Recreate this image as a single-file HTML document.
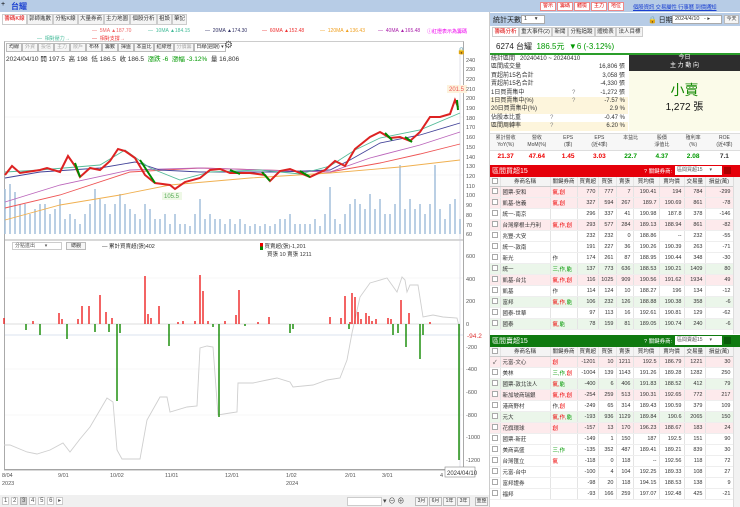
<!DOCTYPE html>
<html><head><meta charset="utf-8">
<style>
*{box-sizing:border-box;margin:0;padding:0}
body{width:740px;height:507px;overflow:hidden;background:#fff;font-family:"Liberation Sans","Noto Sans CJK TC",sans-serif;font-size:7px;color:#333;position:relative}
.a{position:absolute;white-space:nowrap}
.tab{position:absolute;top:14px;height:11px;border:1px solid #ccc;background:#f4f4f4;font-size:5.5px;line-height:9px;text-align:center;color:#333;overflow:hidden;white-space:nowrap}
.btn{position:absolute;height:9px;border:1px solid #bbb;background:#f6f6f6;font-size:5px;line-height:7px;text-align:center;color:#333;overflow:hidden;white-space:nowrap}
table{border-collapse:collapse;font-size:5.5px;table-layout:fixed}
.t td{height:11px;border-right:1px solid #e4e4e4;border-bottom:1px solid #eee;padding:0 2px;text-align:right;white-space:nowrap;overflow:hidden}
.t td:nth-child(1){text-align:center;padding:0}
.t td:nth-child(2),.t td:nth-child(3){text-align:left}
.t tr.h td{height:9px;background:#f4f4f4;text-align:center;border-bottom:1px solid #ccc}
.p td{background:#fdeaec}
.g td{background:#ebf6ea}
.cb{display:inline-block;width:6px;height:6px;border:1px solid #aaa;background:#fff;vertical-align:middle}
.r{color:#e00}.gr{color:#090}
.st{position:absolute;left:490px;width:138px;height:8.4px;font-size:6px;line-height:8.4px;padding-left:1px}
.st span{position:absolute;right:3px}
.st i{position:absolute;font-style:normal;color:#888}
</style></head><body>

<div class="a" style="left:0;top:0;width:740px;height:12px;background:#b7cce6"></div>
<div class="a" style="left:1px;top:1px;font-size:7px;color:#000">+</div>
<div class="a" style="left:11px;top:1px;font-size:8px;color:#1a3fd0;font-weight:bold">台耀</div>
<span class="btn" style="left:540px;top:2px;width:16px;color:#d00;border-color:#e88;background:#fff">警示</span>
<span class="btn" style="left:557px;top:2px;width:16px;color:#d00;border-color:#e88;background:#fff">籌碼</span>
<span class="btn" style="left:574px;top:2px;width:16px;color:#d00;border-color:#e88;background:#fff">體檢</span>
<span class="btn" style="left:591px;top:2px;width:16px;color:#d00;border-color:#e88;background:#fff">主力</span>
<span class="btn" style="left:608px;top:2px;width:16px;color:#d00;border-color:#e88;background:#fff">地位</span>
<div class="a" style="left:633px;top:3px;font-size:5.5px;color:#1a3fd0;text-decoration:underline;letter-spacing:-0.2px">個股資訊 交易屬性 行事曆 到價通知</div>

<div class="tab" style="left:2px;width:25px;color:#d00;background:#fff">籌碼K線</div>
<div class="tab" style="left:27px;width:26px">郭師進數</div>
<div class="tab" style="left:53px;width:25px">分點K線</div>
<div class="tab" style="left:78px;width:26px">大量券商</div>
<div class="tab" style="left:104px;width:26px">主力地圖</div>
<div class="tab" style="left:130px;width:27px">個股分析</div>
<div class="tab" style="left:157px;width:15px">祖設</div>
<div class="tab" style="left:172px;width:15px">筆記</div>

<div class="a" style="left:92px;top:28px;font-size:5px;color:#e66">— &nbsp;5MA ▲187.70</div>
<div class="a" style="left:148px;top:28px;font-size:5px;color:#4b9">— &nbsp;10MA ▲184.15</div>
<div class="a" style="left:205px;top:28px;font-size:5px;color:#336">— &nbsp;20MA ▲174.30</div>
<div class="a" style="left:262px;top:28px;font-size:5px;color:#e33">— &nbsp;60MA ▲152.48</div>
<div class="a" style="left:320px;top:28px;font-size:5px;color:#f0a020">— &nbsp;120MA ▲136.43</div>
<div class="a" style="left:378px;top:28px;font-size:5px;color:#a2a">— &nbsp;40MA ▲165.48</div>
<div class="a" style="left:427px;top:28px;font-size:5px;color:#e0e">ⓘ紅燈表示為籌碼</div>
<div class="a" style="left:37px;top:35px;font-size:5px;color:#4b9">— &nbsp;相對壓力→</div>
<div class="a" style="left:92px;top:35px;font-size:5px;color:#e33">— &nbsp;相對支撐→</div>

<div class="a" style="left:4px;top:41px;width:460px;height:429px;border:1px solid #aaa;border-top:1px solid #ccc"></div>
<span class="btn" style="left:6px;top:43px;width:16px">均線</span><span class="btn" style="left:22px;top:43px;width:16px;color:#aaa">外資</span><span class="btn" style="left:38px;top:43px;width:16px;color:#aaa">投信</span><span class="btn" style="left:54px;top:43px;width:16px;color:#aaa">主力</span><span class="btn" style="left:70px;top:43px;width:16px;color:#aaa">散戶</span><span class="btn" style="left:86px;top:43px;width:16px">布林</span><span class="btn" style="left:102px;top:43px;width:16px">籌數</span><span class="btn" style="left:118px;top:43px;width:16px">揮盤</span><span class="btn" style="left:134px;top:43px;width:20px">本益比</span><span class="btn" style="left:154px;top:43px;width:20px">紅綠燈</span><span class="btn" style="left:174px;top:43px;width:20px;color:#aaa">分價籌</span><span class="btn" style="left:194px;top:43px;width:32px;background:#fff">日線(週期) ▾</span>
<span class="a" style="left:224px;top:40px;font-size:10px;color:#555">⚙</span>
<div class="a" style="left:6px;top:53px;font-size:6.5px;color:#333">2024/04/10 開 197.5 &nbsp;高 198 &nbsp;低 186.5 &nbsp;收 186.5 &nbsp;<span class="gr">漲跌 -6 &nbsp;漲幅 -3.12%</span> &nbsp;量 16,806</div>
<div class="a" style="left:457px;top:47px;font-size:7px">🔒</div>

<svg class="a" style="left:0;top:0" width="490" height="495">
<g stroke="#f0f0f0" stroke-width="0.6">
<line x1="5" y1="117" x2="463" y2="117"/><line x1="5" y1="175" x2="463" y2="175"/>
<line x1="5" y1="278" x2="463" y2="278"/><line x1="5" y1="369" x2="463" y2="369"/><line x1="5" y1="415" x2="463" y2="415"/></g>
<line x1="5" y1="240" x2="463" y2="240" stroke="#999" stroke-width="0.8"/>
<line x1="460" y1="55" x2="460" y2="470" stroke="#ccd" stroke-width="0.6"/>
<path stroke="#a9c3dd" stroke-width="1.6" fill="none" d="M5 234V189M10 234V184M15 234V192M20 234V204M25 234V204M30 234V214M35 234V209M40 234V204M45 234V204M50 234V214M55 234V209M60 234V199M65 234V219M70 234V214M75 234V219M80 234V224M85 234V214M90 234V204M95 234V189M100 234V199M105 234V204M110 234V214M115 234V204M120 234V194M125 234V204M130 234V209M135 234V214M140 234V219M145 234V204M150 234V209M155 234V219M160 234V219M165 234V214M170 234V224M175 234V214M180 234V224M185 234V224M190 234V226M195 234V214M200 234V199M205 234V219M210 234V214M215 234V219M220 234V219M225 234V224M230 234V219M235 234V224M240 234V219M245 234V224M250 234V226M255 234V224M260 234V226M265 234V224M270 234V226M275 234V224M280 234V219M285 234V219M290 234V214M295 234V224M300 234V224M305 234V224M310 234V224M315 234V219M320 234V226M325 234V214M330 234V187M335 234V219M340 234V224M345 234V214M350 234V204M355 234V199M360 234V204M365 234V209M370 234V194M375 234V209M380 234V199M385 234V214M390 234V214M395 234V204M400 234V165M405 234V209M410 234V199M415 234V209M420 234V204M425 234V214M430 234V204M435 234V165M440 234V209M445 234V219M450 234V204M455 234V199M460 234V219"/>
<polyline fill="none" stroke="#f0b050" stroke-width="0.9" points="5,220 60,205 120,195 170,185 250,178 330,173 400,167 460,160"/>
<polyline fill="none" stroke="#e55" stroke-width="0.9" points="5,208 60,195 130,172 200,168 330,172 380,163 420,154 460,144"/>
<polyline fill="none" stroke="#b6b" stroke-width="0.9" points="5,202 60,185 130,170 200,168 330,172 370,158 420,145 460,132"/>
<polyline fill="none" stroke="#449" stroke-width="0.9" points="5,178 40,172 100,168 135,162 160,170 200,172 280,172 330,170 350,160 380,143 420,135 460,123"/>
<polyline fill="none" stroke="#5b9" stroke-width="0.9" points="5,172 40,170 100,165 125,150 150,168 180,180 210,172 260,170 300,174 330,166 355,150 380,138 420,130 460,113"/>
<polyline fill="none" stroke="#d22" stroke-width="2" points="5,175 12,166 20,173 40,170 47,168 60,172 68,156 75,166 80,177 90,168 100,170 110,161 118,149 125,151 135,158 145,175 155,183 170,185 175,189 185,182 200,178 210,170 220,169 230,173 250,173 265,175 270,181 280,171 290,169 300,173 310,177 325,170 335,161 345,166 355,149 370,137 380,132 390,138 400,137 410,141 420,132 430,117 440,117 450,114 455,100 458,107"/>
<g stroke="#080" stroke-width="2"><line x1="75" y1="163" x2="80" y2="177"/><line x1="140" y1="160" x2="155" y2="183"/><line x1="230" y1="170" x2="240" y2="174"/><line x1="262" y1="172" x2="270" y2="181"/><line x1="300" y1="171" x2="310" y2="177"/><line x1="385" y1="133" x2="392" y2="140"/><line x1="405" y1="137" x2="412" y2="142"/><line x1="457" y1="100" x2="458" y2="110"/></g>
<rect x="447" y="85" width="20" height="8" fill="#fdf2dc"/><text x="449" y="91" font-size="6" fill="#e55">201.5</text>
<rect x="162" y="192" width="20" height="8" fill="#eef8e6"/><text x="164" y="198" font-size="6" fill="#5a5">105.5</text>
<g font-size="5.5" fill="#555">
<text x="466" y="62">240</text><text x="466" y="71">230</text><text x="466" y="81">220</text><text x="466" y="91">210</text><text x="466" y="100">200</text><text x="466" y="110">190</text><text x="466" y="120">180</text><text x="466" y="129">170</text><text x="466" y="139">160</text><text x="466" y="149">150</text><text x="466" y="159">140</text><text x="466" y="168">130</text><text x="466" y="178">120</text><text x="466" y="188">110</text><text x="466" y="197">100</text><text x="466" y="207">90</text><text x="466" y="217">80</text><text x="466" y="227">70</text><text x="466" y="236">60</text>
<text x="466" y="258">600</text><text x="466" y="281">400</text><text x="466" y="303">200</text><text x="466" y="326">0</text><text x="466" y="349">-200</text><text x="466" y="371">-400</text><text x="466" y="394">-600</text><text x="466" y="417">-800</text><text x="466" y="439">-1000</text><text x="466" y="462">-1200</text></g>
<text x="467" y="338" font-size="6.5" fill="#d33">-94.2</text>
<line x1="5" y1="335" x2="463" y2="335" stroke="#b8c8e0" stroke-width="0.6"/>
<line x1="5" y1="324" x2="460" y2="324" stroke="#bbb" stroke-width="0.6"/>
<polyline fill="none" stroke="#cfcfcf" stroke-width="0.9" points="4,445 10,445 27,452 37,454 50,450 63,443 70,452 80,439 90,427 100,410 107,398 113,402 117,450 122,459 140,459 147,420 160,397 167,397 170,412 187,407 197,406 200,348 207,346 213,347 218,415 230,413 237,412 238,383 253,383 267,380 277,378 290,382 293,387 313,385 327,380 340,378 347,360 352,333 360,297 370,283 387,278 397,292 402,277 405,280 407,292 410,285 418,285 423,317 433,315 443,317 457,318 460,330"/>
<path stroke="#e22" stroke-width="1.4" fill="none" d="M4 324V318M33 324V321M59 324V313M62 324V319M78 324V319M82 324V306M89 324V306M100 324V295M106 324V312M112 324V318M145 324V276M148 324V314M151 324V318M159 324V306M178 324V322M183 324V321M195 324V321M200 324V275M203 324V291M208 324V321M225 324V321M236 324V315M239 324V290M258 324V322M269 324V317M330 324V317M341 324V318M345 324V296M352 324V293M355 324V297M358 324V312M361 324V319M366 324V313M369 324V316M372 324V321M376 324V319M388 324V318M391 324V319M401 324V300M409 324V313M430 324V322M350 324V322"/>
<path stroke="#180" stroke-width="1.4" fill="none" d="M26 324V330M40 324V335M50 324V324M67 324V339M95 324V332M109 324V332M117 324V401M120 324V333M169 324V346M213 324V327M219 324V417M245 324V326M290 324V333M293 324V329M349 324V329M393 324V335M398 324V333M406 324V347M420 324V359M423 324V335M459 324V460"/>
<line x1="4" y1="470" x2="463" y2="470" stroke="#999" stroke-width="0.8"/>
<g font-size="5.5" fill="#555"><text x="2" y="477">8/04</text><text x="2" y="485">2023</text><text x="58" y="477">9/01</text><text x="110" y="477">10/02</text><text x="165" y="477">11/01</text><text x="225" y="477">12/01</text><text x="286" y="477">1/02</text><text x="286" y="485">2024</text><text x="345" y="477">2/01</text><text x="382" y="477">3/01</text><text x="440" y="477">4</text></g>
<rect x="445" y="467" width="30" height="10" fill="#fff" stroke="#888" stroke-width="0.6"/><text x="447" y="475" font-size="6" fill="#333">2024/04/10</text>
</svg>

<div class="a" style="left:12px;top:242px;width:50px;height:8px;border:1px solid #ccc;font-size:5px;line-height:6px;padding-left:2px;color:#555">分點進出 &nbsp; &nbsp; &nbsp; ▾</div>
<div class="btn" style="left:66px;top:242px;width:20px;height:8px">總觀</div>
<div class="a" style="left:102px;top:242px;font-size:5.5px">— 累計買賣超(張)402</div>
<div class="a" style="left:260px;top:242px;font-size:5.5px"><span style="display:inline-block;width:3px;height:7px;background:linear-gradient(#e00 50%,#080 50%);vertical-align:middle"></span> 買賣超(張)-1,201</div>
<div class="a" style="left:267px;top:250px;font-size:5.5px">買張 10 賣張 1211</div>

<div class="a" style="left:0;top:495px;width:490px;height:12px;background:#f0f0f0"></div>
<div class="a" style="left:2px;top:497px;font-size:6px;color:#555">
<span style="border:1px solid #ccc;background:#fff;padding:0 1px">1</span> <span style="border:1px solid #ccc;background:#fff;padding:0 1px">2</span> <span style="border:1px solid #aaa;background:#ccc;padding:0 1px">3</span> <span style="border:1px solid #ccc;background:#fff;padding:0 1px">4</span> <span style="border:1px solid #ccc;background:#fff;padding:0 1px">5</span> <span style="border:1px solid #ccc;background:#fff;padding:0 1px">6</span> <span style="border:1px solid #ccc;background:#fff;padding:0 1px">▸</span></div>
<div class="a" style="left:347px;top:497px;width:35px;height:9px;border:1px solid #ccc;background:#fff"></div>
<div class="a" style="left:383px;top:496px;font-size:7px;color:#444">▾ ⊖ ⊕</div>
<span class="btn" style="left:415px;top:497px;width:13px">3月</span><span class="btn" style="left:429px;top:497px;width:13px">6月</span><span class="btn" style="left:443px;top:497px;width:13px">1年</span><span class="btn" style="left:457px;top:497px;width:13px">3年</span><span class="btn" style="left:475px;top:497px;width:13px">重整</span>

<div class="a" style="left:489px;top:12px;width:1px;height:495px;background:#ccc"></div>
<div class="a" style="left:490px;top:13px;width:250px;height:13px;background:#b7cce6"></div>
<div class="a" style="left:493px;top:15px;font-size:7px;color:#222">統計天數</div>
<div class="a" style="left:521px;top:15px;width:24px;height:9px;background:#fff;border:1px solid #aaa;font-size:5.5px;line-height:7px;padding-left:2px">1 &nbsp; &nbsp; ▾</div>
<div class="a" style="left:648px;top:15px;font-size:7px;color:#222">🔒 日期</div>
<div class="a" style="left:672px;top:15px;width:50px;height:9px;background:#fff;border:1px solid #aaa;font-size:5.5px;line-height:7px;padding-left:2px">2024/4/10 &nbsp; - ▸</div>
<div class="btn" style="left:724px;top:15px;width:15px">今天</div>
<div class="tab" style="left:492px;top:27px;width:27px;height:10px;color:#d00;background:#fff">籌碼分析</div>
<div class="tab" style="left:519px;top:27px;width:33px;height:10px">重大事件(2)</div>
<div class="tab" style="left:552px;top:27px;width:16px;height:10px">新聞</div>
<div class="tab" style="left:568px;top:27px;width:27px;height:10px">分點追蹤</div>
<div class="tab" style="left:595px;top:27px;width:21px;height:10px">體檢表</div>
<div class="tab" style="left:616px;top:27px;width:27px;height:10px">法人目標</div>
<div class="a" style="left:496px;top:41px;font-size:8px;color:#222">6274 台耀 &nbsp;<span class="gr">186.5元 &nbsp;▼6 (-3.12%)</span></div>
<div class="a" style="left:490px;top:53px;width:250px;height:1.5px;background:#2a9d2a"></div>

<div class="st" style="top:55px">統計區間 &nbsp; 20240410 ~ 20240410</div>
<div class="st" style="top:63.4px">區間成交量<span>16,806 張</span></div>
<div class="st" style="top:71.8px">買超前15名合計<span>3,058 張</span></div>
<div class="st" style="top:80.2px">賣超前15名合計<span>-4,330 張</span></div>
<div class="st" style="top:88.6px">1日買賣集中<i style="left:82px">?</i><span>-1,272 張</span></div>
<div class="st" style="top:97px;background:#fdf5dc">1日買賣集中(%)<i style="left:82px">?</i><span>-7.57 %</span></div>
<div class="st" style="top:105.4px;background:#fdf5dc">20日買賣集中(%)<span>2.9 %</span></div>
<div class="st" style="top:113.8px">佔股本比重<i style="left:60px">?</i><span>-0.47 %</span></div>
<div class="st" style="top:122.2px;background:#fdf5dc">區間周轉率<i style="left:60px">?</i><span>6.20 %</span></div>
<div class="a" style="left:629px;top:55px;width:111px;height:16px;background:#2d2d2d;color:#fff;font-size:6px;text-align:center;line-height:7.5px">今日<br>主 力 動 向</div>
<div class="a" style="left:629px;top:71px;width:111px;height:60px;background:#fbfbe9"></div>
<div class="a" style="left:629px;top:80px;width:111px;text-align:center;font-size:14px;color:#180">小賣</div>
<div class="a" style="left:629px;top:98px;width:111px;text-align:center;font-size:10px;color:#111">1,272 張</div>

<div class="a" style="left:490px;top:133px;width:250px;height:18px;background:#f7f7f7;border-top:1px solid #ddd;border-bottom:1px solid #ddd"></div>
<div class="a" style="left:490px;top:135px;width:250px;font-size:5px;line-height:6.5px;color:#444;display:flex;text-align:center">
<div style="flex:1">累計營收<br>YoY(%)</div><div style="flex:1">營收<br>MoM(%)</div><div style="flex:1">EPS<br>(季)</div><div style="flex:1">EPS<br>(近4季)</div><div style="flex:1">本益比</div><div style="flex:1">股價<br>淨值比</div><div style="flex:1">殖利率<br>(%)</div><div style="flex:1">ROE<br>(近4季)</div></div>
<div class="a" style="left:490px;top:153px;width:250px;font-size:6.5px;font-weight:bold;display:flex;text-align:center">
<div style="flex:1" class="r">21.37</div><div style="flex:1" class="r">47.64</div><div style="flex:1" class="r">1.45</div><div style="flex:1" class="r">3.03</div><div style="flex:1" class="gr">22.7</div><div style="flex:1" class="gr">4.37</div><div style="flex:1" class="gr">2.08</div><div style="flex:1;color:#333">7.1</div></div>

<div class="a" style="left:490px;top:165px;width:250px;height:12px;background:#e5000a"></div>
<div class="a" style="left:492px;top:166px;font-size:7px;color:#fff">區間買超15</div>
<div class="a" style="left:644px;top:167px;font-size:5.5px;color:#fff">? 關鍵券商:</div>
<div class="a" style="left:675px;top:166px;width:47px;height:9px;background:#fff;font-size:5px;line-height:9px;padding-left:2px;color:#555">區間買超15 &nbsp; &nbsp; ▾</div>
<div class="a" style="left:724px;top:167px;width:7px;height:7px;background:#a00"></div>
<table class="t a" style="left:490px;top:177px;width:243px">
<colgroup><col style="width:10px"><col style="width:50px"><col style="width:27px"><col style="width:21px"><col style="width:18px"><col style="width:17px"><col style="width:26px"><col style="width:25px"><col style="width:21px"><col style="width:28px"></colgroup>
<tr class="h"><td><span class="cb"></span></td><td style="text-align:center">券商名稱</td><td style="text-align:center">關鍵券商</td><td>買賣超</td><td>買張</td><td>賣張</td><td>買均價</td><td>賣均價</td><td>交易量</td><td>損益(萬)</td></tr>
<tr class="p"><td><span class="cb"></span></td><td>國票-安和</td><td class="r">氣,創</td><td>770</td><td>777</td><td>7</td><td>190.41</td><td>194</td><td>784</td><td>-299</td></tr>
<tr class="p"><td><span class="cb"></span></td><td>凱基-信義</td><td class="r">氣,創</td><td>327</td><td>594</td><td>267</td><td>189.7</td><td>190.69</td><td>861</td><td>-78</td></tr>
<tr><td><span class="cb"></span></td><td>統一-南京</td><td></td><td>296</td><td>337</td><td>41</td><td>190.98</td><td>187.8</td><td>378</td><td>-146</td></tr>
<tr class="p"><td><span class="cb"></span></td><td>台灣摩根士丹利</td><td class="r">氣,作,創</td><td>293</td><td>577</td><td>284</td><td>189.13</td><td>188.94</td><td>861</td><td>-82</td></tr>
<tr><td><span class="cb"></span></td><td>兆豐-大安</td><td></td><td>232</td><td>232</td><td>0</td><td>188.86</td><td>--</td><td>232</td><td>-55</td></tr>
<tr><td><span class="cb"></span></td><td>統一-敦南</td><td></td><td>191</td><td>227</td><td>36</td><td>190.26</td><td>190.39</td><td>263</td><td>-71</td></tr>
<tr><td><span class="cb"></span></td><td>新光</td><td>作</td><td>174</td><td>261</td><td>87</td><td>188.95</td><td>190.44</td><td>348</td><td>-30</td></tr>
<tr class="g"><td><span class="cb"></span></td><td>統一</td><td class="gr">三,作,能</td><td>137</td><td>773</td><td>636</td><td>188.53</td><td>190.21</td><td>1409</td><td>80</td></tr>
<tr class="p"><td><span class="cb"></span></td><td>凱基-台北</td><td class="r">氣,作,創</td><td>116</td><td>1025</td><td>909</td><td>190.56</td><td>191.62</td><td>1934</td><td>49</td></tr>
<tr><td><span class="cb"></span></td><td>凱基</td><td>作</td><td>114</td><td>124</td><td>10</td><td>188.27</td><td>196</td><td>134</td><td>-12</td></tr>
<tr class="g"><td><span class="cb"></span></td><td>富邦</td><td class="r">氣,作,<span class="gr">能</span></td><td>106</td><td>232</td><td>126</td><td>188.88</td><td>190.38</td><td>358</td><td>-6</td></tr>
<tr><td><span class="cb"></span></td><td>國泰-世華</td><td></td><td>97</td><td>113</td><td>16</td><td>192.61</td><td>190.81</td><td>129</td><td>-62</td></tr>
<tr class="g"><td><span class="cb"></span></td><td>國泰</td><td class="r">氣,<span class="gr">能</span></td><td>78</td><td>159</td><td>81</td><td>189.05</td><td>190.74</td><td>240</td><td>-6</td></tr>
</table>
<div class="a" style="left:733px;top:177px;width:7px;height:157px;background:#f2f2f2;border-left:1px solid #ddd"></div>

<div class="a" style="left:490px;top:335px;width:250px;height:12px;background:#0f7a10"></div>
<div class="a" style="left:492px;top:336px;font-size:7px;color:#fff">區間賣超15</div>
<div class="a" style="left:644px;top:337px;font-size:5.5px;color:#fff">? 關鍵券商:</div>
<div class="a" style="left:675px;top:336px;width:47px;height:9px;background:#fff;font-size:5px;line-height:9px;padding-left:2px;color:#555">區間賣超15 &nbsp; &nbsp; ▾</div>
<div class="a" style="left:724px;top:337px;width:7px;height:7px;background:#0a5a0a"></div>
<table class="t a" style="left:490px;top:347px;width:243px">
<colgroup><col style="width:10px"><col style="width:50px"><col style="width:27px"><col style="width:21px"><col style="width:18px"><col style="width:17px"><col style="width:26px"><col style="width:25px"><col style="width:21px"><col style="width:28px"></colgroup>
<tr class="h"><td><span class="cb"></span></td><td style="text-align:center">券商名稱</td><td style="text-align:center">關鍵券商</td><td>買賣超</td><td>買張</td><td>賣張</td><td>買均價</td><td>賣均價</td><td>交易量</td><td>損益(萬)</td></tr>
<tr class="p"><td>✓</td><td>元富-文心</td><td class="r">創</td><td>-1201</td><td>10</td><td>1211</td><td>192.5</td><td>186.79</td><td>1221</td><td>30</td></tr>
<tr><td><span class="cb"></span></td><td>美林</td><td class="gr">三,作,<span class="r">創</span></td><td>-1004</td><td>139</td><td>1143</td><td>191.26</td><td>189.28</td><td>1282</td><td>250</td></tr>
<tr class="g"><td><span class="cb"></span></td><td>國票-敦北法人</td><td class="r">氣,<span class="gr">能</span></td><td>-400</td><td>6</td><td>406</td><td>191.83</td><td>188.52</td><td>412</td><td>79</td></tr>
<tr class="p"><td><span class="cb"></span></td><td>新加坡商瑞銀</td><td class="r">氣,作,創</td><td>-254</td><td>259</td><td>513</td><td>190.31</td><td>192.65</td><td>772</td><td>217</td></tr>
<tr><td><span class="cb"></span></td><td>港商野村</td><td>作,<span class="r">創</span></td><td>-249</td><td>65</td><td>314</td><td>189.43</td><td>190.59</td><td>379</td><td>109</td></tr>
<tr class="g"><td><span class="cb"></span></td><td>元大</td><td class="r">氣,作,<span class="gr">能</span></td><td>-193</td><td>936</td><td>1129</td><td>189.84</td><td>190.6</td><td>2065</td><td>150</td></tr>
<tr class="p"><td><span class="cb"></span></td><td>花旗環球</td><td class="r">創</td><td>-157</td><td>13</td><td>170</td><td>196.23</td><td>188.67</td><td>183</td><td>24</td></tr>
<tr><td><span class="cb"></span></td><td>國票-新莊</td><td></td><td>-149</td><td>1</td><td>150</td><td>187</td><td>192.5</td><td>151</td><td>90</td></tr>
<tr><td><span class="cb"></span></td><td>美商高盛</td><td class="gr">三,作</td><td>-135</td><td>352</td><td>487</td><td>189.41</td><td>189.21</td><td>839</td><td>30</td></tr>
<tr><td><span class="cb"></span></td><td>台灣匯立</td><td class="r">氣</td><td>-118</td><td>0</td><td>118</td><td>--</td><td>192.56</td><td>118</td><td>72</td></tr>
<tr><td><span class="cb"></span></td><td>元富-台中</td><td></td><td>-100</td><td>4</td><td>104</td><td>192.25</td><td>189.33</td><td>108</td><td>27</td></tr>
<tr><td><span class="cb"></span></td><td>富邦證券</td><td></td><td>-98</td><td>20</td><td>118</td><td>194.15</td><td>188.53</td><td>138</td><td>9</td></tr>
<tr><td><span class="cb"></span></td><td>福邦</td><td></td><td>-93</td><td>166</td><td>259</td><td>197.07</td><td>192.48</td><td>425</td><td>-21</td></tr>
</table>
<div class="a" style="left:733px;top:347px;width:7px;height:160px;background:#f2f2f2;border-left:1px solid #ddd"></div>
</body></html>
